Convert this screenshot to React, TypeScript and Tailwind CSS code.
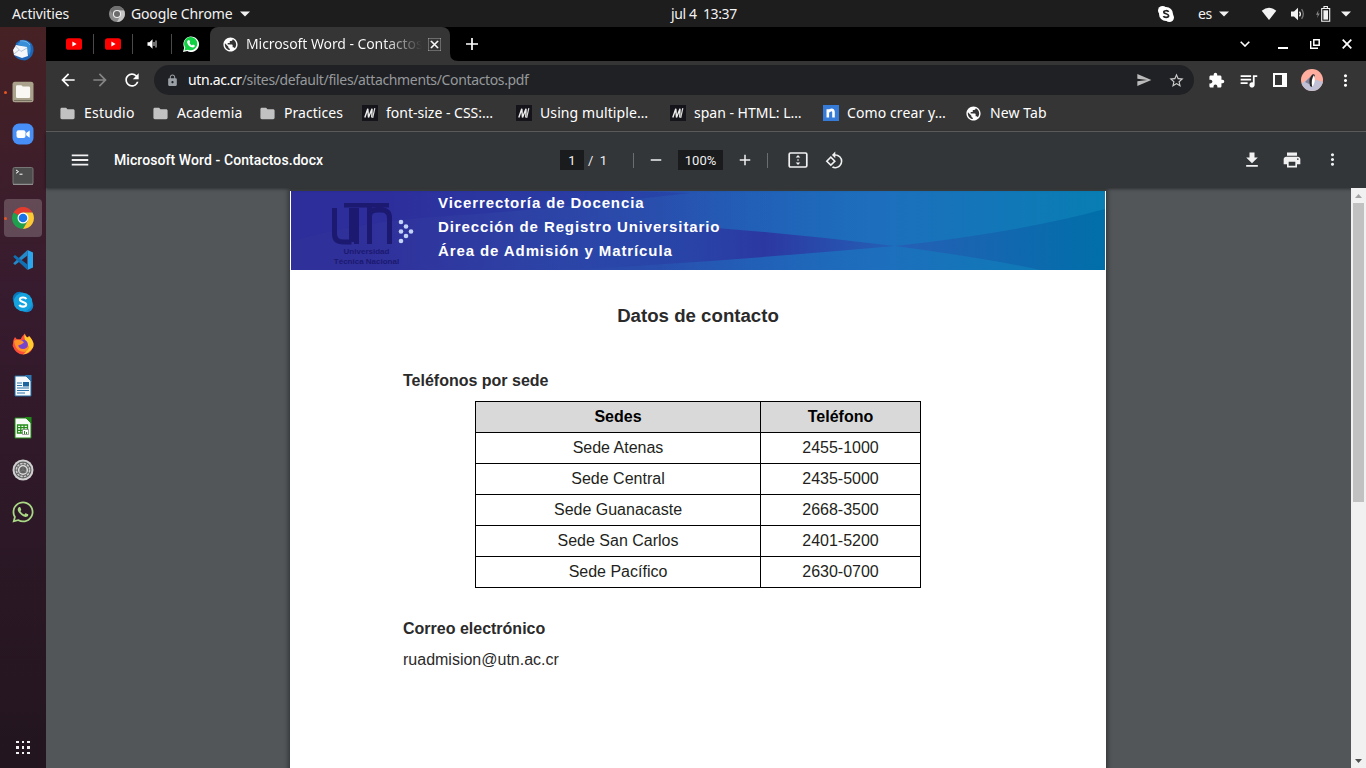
import React from "react";
import {
  MdArrowBack, MdArrowForward, MdRefresh, MdLock, MdSend, MdStarOutline, MdExtension, MdQueueMusic,
  MdMoreVert, MdPublic, MdMenu, MdRotate90DegreesCcw, MdFileDownload, MdPrint, MdFolder, MdClose, MdAdd, MdRemove,
} from "react-icons/md";
import { FaWhatsapp } from "react-icons/fa";

const ui = "font-['Noto_Sans',sans-serif] whitespace-pre leading-none";

function Cell({ w, children, className = "" }: { w: string; children?: React.ReactNode; className?: string }) {
  return <div className={`flex h-full shrink-0 items-center justify-center ${w} ${className}`}>{children}</div>;
}

function Caret() {
  return (
    <svg width="10" height="6" viewBox="0 0 10 6"><path d="M0 .5h10L5 5.5z" fill="#f2f2f2" /></svg>
  );
}

function TopBar() {
  return (
    <header className={`flex h-[27px] shrink-0 items-center bg-[#1d1d1d] text-[14px] text-[#f2f2f2] ${ui}`}>
      <div className="flex w-[671px] items-center pl-3">
        <span className="w-[97px] tracking-[-0.12px]">Activities</span>
        <svg width="16" height="16" viewBox="0 0 16 16" className="mr-[6px]">
          <circle cx="8" cy="8" r="8" fill="#8c8c8c" />
          <path d="M8 4.3h7A8 8 0 0 1 8 16l3.2-6.1z" fill="#c4c4c4" />
          <path d="M1.1 4A8 8 0 0 1 15 4.3H8L4.8 10z" fill="#707070" />
          <circle cx="8" cy="8" r="4.1" fill="#eee" /><circle cx="8" cy="8" r="3" fill="#6b6b6b" />
        </svg>
        <span className="w-[109px] tracking-[-0.15px]">Google Chrome</span>
        <Caret />
      </div>
      <span className="w-[70px] tracking-[-0.4px]">jul 4  13:37</span>
      <div className="flex flex-1 items-center justify-end">
        <Cell w="w-[20px]">
          <svg width="16" height="16" viewBox="0 0 16 16">
            <circle cx="8" cy="8" r="7" fill="#fff" /><circle cx="4.6" cy="4.6" r="4.6" fill="#fff" /><circle cx="11.4" cy="11.4" r="4.6" fill="#fff" />
            <path d="M10.6 5.8C10 4.4 5.8 4.2 5.8 6.2c0 2 4.8 1.2 4.8 3.6 0 2.1-4.5 2-5.2.3" fill="none" stroke="#222" strokeWidth="1.7" />
          </svg>
        </Cell>
        <span className="ml-[22px] w-[21px] tracking-[-0.4px]">es</span>
        <Caret />
        <Cell w="w-[20px]" className="ml-[30px]">
          <svg width="16" height="14" viewBox="0 0 16 14"><path d="M.7 3.8Q8-2.3 15.3 3.8L8 13z" fill="#f2f2f2" /></svg>
        </Cell>
        <Cell w="w-[20px]" className="ml-[9px]">
          <svg width="16" height="14" viewBox="0 0 16 14">
            <path d="M1 4.5h3L8 .8v12.4L4 9.5H1z" fill="#f2f2f2" />
            <path d="M9.5 4.6q1.8 2.4 0 4.8" fill="none" stroke="#f2f2f2" strokeWidth="1.3" />
            <path d="M11.6 2.2q3.4 4.8 0 9.6" fill="none" stroke="#777" strokeWidth="1.3" />
          </svg>
        </Cell>
        <Cell w="w-[18px]" className="ml-[6px]">
          <svg width="16" height="16" viewBox="0 0 16 16">
            <path d="M3.5 4L1 8.7h1.8L2 12l2.8-4.6H3z" fill="#888" />
            <path d="M6.7 2.5h8v12.8h-8zM9 .5h3.4v2H9z" fill="none" stroke="#f2f2f2" strokeWidth="1.1" />
            <path d="M8.4 4.3H13v9.3H8.4z" fill="#f2f2f2" />
          </svg>
        </Cell>
        <span className="mr-[15px] ml-[9px]"><Caret /></span>
      </div>
    </header>
  );
}

function Folder() {
  return <MdFolder size={17} color="#c2c2c2" className="-ml-[2px]" />;
}
function Mdn() {
  return (
    <svg width="16" height="16" viewBox="0 0 16 16">
      <path d="M0 0h16v16H0z" fill="#15141a" />
      <path d="M2.8 12.5L5.8 3.7 6.5 12.5 10 3.7 9.8 12.5" fill="none" stroke="#eee" strokeWidth="1.4" /><path d="M12.8 3.2L10.7 12.8" stroke="#ddd" strokeWidth="1.2" />
    </svg>
  );
}
function Youtube() {
  return (
    <svg width="16" height="12" viewBox="0 0 16 12"><rect width="16" height="11.6" y=".2" rx="2.6" fill="#f00" /><path d="M6.4 3.6v4.8L10.6 6z" fill="#fff" /></svg>
  );
}
function Chrome({ size }: { size: number }) {
  return (
    <svg width={size} height={size} viewBox="0 0 22 22">
      <path d="M11 11L1.5 5.5A11 11 0 0 1 20.5 5.5H11z" fill="#e33b2e" />
      <path d="M11 11L1.5 5.5A11 11 0 0 0 11 22l4.8-8.3z" fill="#1fa04d" />
      <path d="M11 5.5h9.5A11 11 0 0 1 11 22l4.8-8.3z" fill="#fcc934" />
      <circle cx="11" cy="11" r="5.5" fill="#fff" /><circle cx="11" cy="11" r="4.3" fill="#1a73e8" />
    </svg>
  );
}

function DockItem({ children, dot, active }: { children: React.ReactNode; dot?: boolean; active?: boolean }) {
  return (
    <div className="flex h-[42px] w-[46px] items-center">
      <i className={`ml-1 h-[38px] w-[38px] shrink-0 rounded-[4px] flex items-center ${active ? "bg-white/20" : ""}`}>
        <b className={`h-[3px] w-[3px] rounded-full ${dot ? "bg-[#e95420]" : ""}`} />
        <span className="ml-[5px] flex w-[22px] justify-center">{children}</span>
      </i>
    </div>
  );
}

function Dock() {
  return (
    <aside className="flex w-[46px] shrink-0 flex-col bg-linear-to-b from-[#462124] via-[#371b2e] via-35% to-[#22151f] pt-[2px]">
      <DockItem>
        <svg width="22" height="22" viewBox="0 0 22 22">
          <path d="M4 4Q9-1 15 1.5 22 4 21.5 12 20 20 13 21.5 5 21 2 16z" fill="#1f65b7" />
          <path d="M5 5q7-6 13 0 2 6-1 12-1-9-12-12z" fill="#398ed8" />
          <path d="M1 11l3-5 11 2 1 9-6 2-8-3z" fill="#f4f6fa" /><path d="M3.5 7l5.5 5.5L15 9M2 15l5-4" fill="none" stroke="#a6b7cf" strokeWidth=".8" />
          <path d="M8 2q7-1 10 4" stroke="#74bdf0" fill="none" />
        </svg>
      </DockItem>
      <DockItem dot>
        <svg width="22" height="22" viewBox="0 0 22 22">
          <rect x=".5" y=".7" width="21" height="20.6" rx="2.5" fill="#aaa28c" /><path d="M2 19.5h18" stroke="#777162" />
          <path d="M4 5.5q0-1.3 1.3-1.3h4l1.5 1.4h6q1.3 0 1.3 1.3v8.8q0 1.3-1.3 1.3H5.3Q4 17 4 15.700z" fill="#f8f7f4" />
        </svg>
      </DockItem>
      <DockItem>
        <svg width="22" height="22" viewBox="0 0 22 22">
          <rect x=".5" y=".5" width="21" height="21" rx="6.5" fill="#478ff7" />
          <rect x="4.5" y="7.2" width="9" height="7.8" rx="2" fill="#fff" /><path d="M14.2 10l3.5-2.600v7.300l-3.500-2.500z" fill="#fff" />
        </svg>
      </DockItem>
      <DockItem>
        <svg width="22" height="22" viewBox="0 0 22 22">
          <rect x="1" y="2.500" width="20" height="17" rx="1.500" fill="#4d4d4d" stroke="#767676" /><path d="M1 19.300h20" stroke="#999" />
          <path d="M4 5l2.500 1.600L4 8.300M7.500 9.200h3" fill="none" stroke="#fff" />
        </svg>
      </DockItem>
      <DockItem dot active><Chrome size={22} /></DockItem>
      <DockItem>
        <svg width="20" height="20" viewBox="0 0 20 20">
          <path d="M14.500 0L20 2.500v15L14.500 20z" fill="#2aa5ee" />
          <path d="M14.500 0v5.500L2 15 .2 13.300z" fill="#2489ca" /><path d="M14.500 20v-5.500L2 5 .2 6.700z" fill="#1070b3" />
        </svg>
      </DockItem>
      <DockItem>
        <svg width="22" height="22" viewBox="0 0 22 22">
          <circle cx="7.500" cy="7.500" r="6.800" fill="#0a76b8" /><circle cx="14.500" cy="14.500" r="6.800" fill="#1489d0" /><circle cx="11" cy="11" r="9.300" fill="#15a3df" />
          <path d="M14.300 8.100C13.400 5.900 7.900 6 7.900 8.600c0 2.900 6.300 1.700 6.300 4.900 0 2.900-6 2.700-6.700.3" fill="none" stroke="#fff" strokeWidth="2.100" />
        </svg>
      </DockItem>
      <DockItem>
        <svg width="22" height="22" viewBox="0 0 22 22">
          <path d="M3 4l2 2.500L9 6q0-2 4-5.500 0 3 3 4l1-1.500q6 6 4 11.500Q18 21.500 11 21.500T.700 13Q.500 7 3 4z" fill="#ff4f3a" />
          <path d="M13 .500q0 3 3 4l1-1.500q6 6 4 11.500-4 6-10 7 7-5 4-12-4-4-2-9z" fill="#ffcb2e" />
          <circle cx="11" cy="11.500" r="4.800" fill="#7544cf" /><path d="M2 8l3-1.500 5 1 2 2-3 2-3 1q1 3.500 5 3.500t6-4q1 5-4 7-8 0-10-7z" fill="#ff9529" />
        </svg>
      </DockItem>
      <DockItem>
        <svg width="18" height="22" viewBox="0 0 18 22">
          <path d="M1 1h11l5 5v15H1z" fill="#f6fafd" stroke="#21689f" /><path d="M11 0h6.500v7z" fill="#2d79b3" />
          <path d="M3 8h5M3 10.500h5M3 13h12M3 15.500h12M3 18h8" stroke="#2d75aa" strokeWidth="1.200" /><path d="M9 7h6v4.500H9z" fill="#1d659f" />
        </svg>
      </DockItem>
      <DockItem>
        <svg width="18" height="22" viewBox="0 0 18 22">
          <path d="M1 1h11l5 5v15H1z" fill="#f8fcf6" stroke="#218415" /><path d="M11 0h6.500v7z" fill="#208b18" />
          <path d="M3.500 8h10v8h-10zM3.500 10.600h10M3.500 13.300h10M6.800 8v8M10 8v8" fill="none" stroke="#248c19" strokeWidth="1.300" /><path d="M8.500 12.500h6v5h-6z" fill="#fff" stroke="#777" strokeWidth=".7" /><path d="M10.500 17v-3M12.500 17v-2" stroke="#248c19" />
        </svg>
      </DockItem>
      <DockItem>
        <svg width="22" height="22" viewBox="0 0 22 22">
          <circle cx="11" cy="11" r="10.500" fill="#d0d0d0" /><circle cx="11" cy="11" r="8.500" fill="#616161" />
          <circle cx="11" cy="11" r="6.600" fill="none" stroke="#ccc" strokeWidth="1.500" strokeDasharray="2.500 1" />
          <circle cx="11" cy="11" r="4.300" fill="none" stroke="#ddd" strokeWidth="1.500" /><path d="M11 11V7M11 11l-3.500 2M11 11l3.500 2" stroke="#777" />
        </svg>
      </DockItem>
      <DockItem><FaWhatsapp size={24} color="#a9d985" className="-mx-px" /></DockItem>
      <div className="mt-auto mb-[14px] grid grid-cols-3 gap-[3px] self-center">
        {Array.from({ length: 9 }, (_, i) => <i key={i} className="h-[2.500px] w-[2.500px] bg-[#f2f2f2]" />)}
      </div>
    </aside>
  );
}

function Tabs() {
  return (
    <div className="flex h-[34px] shrink-0 items-center bg-black text-white">
      <Cell w="w-[47px]" className="pl-[9px]"><Youtube /></Cell>
      <i className="h-5 w-px bg-[#4a4a4a]" />
      <Cell w="w-[38px]"><Youtube /></Cell>
      <i className="h-5 w-px bg-[#4a4a4a]" />
      <Cell w="w-[38px]">
        <svg width="10" height="10" viewBox="0 0 10 10"><path d="M.500 3.300h2L5.500.300v9.400l-3-3h-2z" fill="#fff" /><path d="M7 3v4M9 1.500v7" stroke="#ddd" /></svg>
      </Cell>
      <i className="h-5 w-px bg-[#4a4a4a]" />
      <Cell w="w-[38px]">
        <svg width="16" height="16" viewBox="0 0 16 16">
          <path d="M0 16l1.200-4.300A7.800 7.800 0 1 1 4.300 15z" fill="#fff" /><path d="M1.500 14.500l.8-3A6.600 6.600 0 1 1 5 13.700z" fill="#10d044" />
          <path d="M5.200 4.200l1-.2 1 2-.8 1.100q.9 1.500 2.500 2.300l1.100-1 1.900 1q0 1.900-2 2.100-4.700-.5-5.900-5.300 0-1.300 1.200-2z" fill="#fff" />
        </svg>
      </Cell>
      <div className="flex h-full w-[240px] items-center rounded-t-[8px] bg-[#353535]">
        <Cell w="w-[36px]" className="pl-[4px]"><MdPublic size={17} /></Cell>
        <span className={`w-[176px] overflow-hidden bg-linear-to-r from-white from-78% to-transparent bg-clip-text py-1 text-[14px] tracking-[-0.08px] text-transparent ${ui}`}>Microsoft Word - Contactos.docx</span>
        <Cell w="w-[24px]"><MdClose size={13} strokeWidth="1" /></Cell>
      </div>
      <svg width="8" height="8" viewBox="0 0 8 8" className="self-end"><path d="M0 0v8h8Q0 8 0 0" fill="#353535" /></svg>
      <Cell w="w-[28px]"><svg width="12" height="12" viewBox="0 0 12 12"><path d="M6 0v12M0 6h12" stroke="#fff" strokeWidth="1.700" /></svg></Cell>
      <div className="flex h-full flex-1 items-center justify-end">
        <Cell w="w-[38px]"><svg width="10" height="6" viewBox="0 0 10 6"><path d="M.700.700L5 5 9.300.700" fill="none" stroke="#fff" strokeWidth="1.600" /></svg></Cell>
        <Cell w="w-[38px]" className="pt-[8px]"><i className="h-[2px] w-[10px] bg-white" /></Cell>
        <Cell w="w-[26px]"><svg width="10" height="10" viewBox="0 0 10 10"><path d="M3.800.800h5.400v5.400H3.800z" fill="none" stroke="#fff" strokeWidth="1.500" /><path d="M.700 2v7.300H8" fill="none" stroke="#fff" strokeWidth="1.400" /></svg></Cell>
        <Cell w="w-[38px]"><svg width="10" height="10" viewBox="0 0 10 10"><path d="M.700.700l8.600 8.600M9.300.700L.700 9.300" stroke="#fff" strokeWidth="1.700" /></svg></Cell>
      </div>
    </div>
  );
}

function Toolbar() {
  return (
    <div className="flex h-[38px] shrink-0 items-center bg-[#353535] pl-[6px] text-white">
      <Cell w="w-[32px]"><MdArrowBack size={20} /></Cell>
      <Cell w="w-[32px]"><MdArrowForward size={20} color="#858585" /></Cell>
      <Cell w="w-[32px]"><MdRefresh size={20} /></Cell>
      <div className="ml-[6px] flex h-[30px] w-[1040px] items-center rounded-full bg-[#202124]">
        <Cell w="w-[34px]" className="pl-[2px]"><MdLock size={13} color="#9aa0a6" /></Cell>
        <span className={`text-[14px] tracking-[-0.36px] text-[#96999c] ${ui}`}><span className="text-white">utn.ac.cr</span>/sites/default/files/attachments/Contactos.pdf</span>
        <div className="ml-auto flex pr-[2px]">
          <Cell w="w-[32px]"><MdSend size={16} color="#bbb" /></Cell>
          <Cell w="w-[32px]"><MdStarOutline size={17} color="#ccc" /></Cell>
        </div>
      </div>
      <Cell w="w-[32px]" className="ml-[6px]"><MdExtension size={17} /></Cell>
      <Cell w="w-[32px]"><MdQueueMusic size={21} /></Cell>
      <Cell w="w-[32px]"><svg width="14" height="14" viewBox="0 0 14 14"><path d="M1 1h12v12H1z" fill="none" stroke="#fff" strokeWidth="2" /><path d="M9 0h5v14H9z" fill="#fff" /></svg></Cell>
      <Cell w="w-[32px]">
        <svg width="22" height="22" viewBox="0 0 22 22" className="rounded-full">
          <path d="M0 0h22v22H0z" fill="#ffad9e" /><path d="M0 15l8-6 4 3 4-1 6 2v9H0z" fill="#bfc0d5" /><path d="M4 13l5-5 1 8z" fill="#808098" />
          <path d="M9 17q-2-9 3-12l2 1q-3 9-3 12z" fill="#282629" /><path d="M11 17q-1-7 2-11 2 6-1 11z" fill="#fff" />
        </svg>
      </Cell>
      <Cell w="w-[34px]"><MdMoreVert size={19} /></Cell>
    </div>
  );
}

const bookmarks: { label: string; icon: React.ReactNode; box: string; gap: string; track: string }[] = [
  { label: "Estudio", icon: <Folder />, box: "w-[93px]", gap: "w-[23px]", track: "tracking-[0.25px]" },
  { label: "Academia", icon: <Folder />, box: "w-[107px]", gap: "w-[23px]", track: "tracking-[0.1px]" },
  { label: "Practices", icon: <Folder />, box: "w-[101px]", gap: "w-[23px]", track: "tracking-[0.05px]" },
  { label: "font-size - CSS:…", icon: <Mdn />, box: "w-[154px]", gap: "w-[24px]", track: "tracking-[0px]" },
  { label: "Using multiple…", icon: <Mdn />, box: "w-[154px]", gap: "w-[24px]", track: "tracking-[0.1px]" },
  { label: "span - HTML: L…", icon: <Mdn />, box: "w-[153px]", gap: "w-[24px]", track: "tracking-[0px]" },
  {
    label: "Como crear y…",
    icon: <svg width="16" height="16" viewBox="0 0 16 16"><path d="M0 0h16v16H0z" fill="#367bd8" /><path d="M4.800 12.500V4.300M4.800 7q5-4.300 5.700 0v5.500" fill="none" stroke="#fff" strokeWidth="2.600" /></svg>,
    box: "w-[143px]", gap: "w-[24px]", track: "tracking-[0.1px]",
  },
  { label: "New Tab", icon: <MdPublic size={17} className="-ml-[1px]" />, box: "w-[90px]", gap: "w-[24px]", track: "tracking-[0.1px]" },
];

function Bookmarks() {
  return (
    <nav className="flex h-[33px] shrink-0 border-b border-[#626262] bg-[#353535] pb-1 pl-[15px] text-white">
      {bookmarks.map((b) => (
        <div key={b.label} className={`flex shrink-0 items-center ${b.box}`}>
          <span className={`shrink-0 ${b.gap}`}>{b.icon}</span>
          <span className={`text-[14px] ${b.track} ${ui}`}>{b.label}</span>
        </div>
      ))}
    </nav>
  );
}

function PdfBar() {
  return (
    <div className="z-10 flex h-[56px] shrink-0 items-center bg-[#323639] font-[Roboto,sans-serif] text-[13px] leading-none text-[#f1f1f1] shadow-[0_1px_3px_rgba(0,0,0,0.45)]">
      <Cell w="w-[68px]"><MdMenu size={22} /></Cell>
      <span className="w-[446px] text-[14px] font-medium tracking-[0.08px] text-white">Microsoft Word - Contactos.docx</span>
      <span className="flex h-5 w-6 items-center justify-center bg-[#191b1c]">1</span>
      <span className="ml-[4px] w-[45px] whitespace-pre">/  1</span>
      <i className="h-[15px] w-px bg-[#6b6e70]" />
      <Cell w="w-[44px]"><MdRemove size={18} /></Cell>
      <span className="flex h-5 w-[45px] items-center justify-center bg-[#191b1c]">100%</span>
      <Cell w="w-[44px]"><MdAdd size={18} /></Cell>
      <i className="h-[15px] w-px bg-[#6b6e70]" />
      <Cell w="w-[36px]" className="ml-[12px]">
        <svg width="20" height="16" viewBox="0 0 20 16"><rect x="1.200" y="1" width="17.600" height="14" rx="1.300" fill="none" stroke="#f1f1f1" strokeWidth="1.700" /><path d="M7.700 5.500L10 3l2.300 2.500zM7.700 10.500L10 13l2.300-2.500zM9.400 7.300h1.200v1.400H9.400z" fill="#f1f1f1" /></svg>
      </Cell>
      <Cell w="w-[36px]"><MdRotate90DegreesCcw size={19} /></Cell>
      <div className="ml-auto flex pr-[14px]">
        <Cell w="w-[40px]"><MdFileDownload size={20} /></Cell>
        <Cell w="w-[40px]"><MdPrint size={20} /></Cell>
        <Cell w="w-[40px]"><MdMoreVert size={19} /></Cell>
      </div>
    </div>
  );
}

const rows = [
  ["Sede Atenas", "2455-1000"], ["Sede Central", "2435-5000"], ["Sede Guanacaste", "2668-3500"],
  ["Sede San Carlos", "2401-5200"], ["Sede Pacífico", "2630-0700"],
];

function Banner() {
  return (
    <div className="relative mx-px h-[79px] overflow-hidden bg-linear-to-r from-[#30309b] from-10% via-[#235bb5] via-60% to-[#087eb5]">
      <svg width="814" height="79" viewBox="0 0 814 79" className="absolute inset-0">
        <defs>
          <linearGradient id="l"><stop offset="0" stopColor="#2543a5" stopOpacity="0" /><stop offset=".65" stopColor="#2c38a2" /><stop offset="1" stopColor="#2461b6" /></linearGradient>
          <linearGradient id="r"><stop offset="0" stopColor="#265fb6" /><stop offset="1" stopColor="#006fa9" /></linearGradient>
          <linearGradient id="m"><stop offset="0" stopColor="#1f65b9" stopOpacity="0" /><stop offset=".5" stopColor="#1d6fbd" /><stop offset="1" stopColor="#087eb3" /></linearGradient>
        </defs>
        <path d="M370 0h444v79H370z" fill="url(#m)" />
        <path d="M230 27q180 4 374 28Q400 73 270 79H230z" fill="url(#l)" />
        <path d="M604 55Q730 41 814 18v61h-65Q700 68 604 55z" fill="url(#r)" />
        <path d="M0 50Q70 30 155 25T400 2L330 0H0z" fill="#25259a" opacity=".25" />
      </svg>
      <div className="relative flex">
        <div className="flex w-[147px] flex-col items-center pt-[12px] pl-[16px] text-[#1b1970]">
          <svg width="82" height="42" viewBox="0 0 82 42">
            <path d="M2.500 5v26q0 8 9 8h8M19.500 5v34M24.500 5v36M12 2h45M37.500 3v38M37.500 13q0-6 8-6h4q8 0 8 8v26" fill="none" stroke="#1b1970" strokeWidth="5" />
            <g fill="#c3d3f5"><circle cx="69" cy="19" r="2.300" /><circle cx="74" cy="23.500" r="2.300" /><circle cx="69" cy="28.500" r="2.300" /><circle cx="79" cy="28.500" r="2.300" /><circle cx="74" cy="33" r="2.300" /><circle cx="69" cy="38" r="2.300" /></g>
          </svg>
          <div className="w-[82px] pt-[2px] text-center font-['Liberation_Sans',sans-serif] text-[8px] leading-[10px] font-bold"><p className="pr-3">Universidad</p><p className="pr-3 whitespace-nowrap">Técnica Nacional</p></div>
        </div>
        <div className="font-['Liberation_Sans',sans-serif] text-[15px] leading-[24px] font-bold tracking-[0.9px] text-white">
          <p>Vicerrectoría de Docencia</p><p>Dirección de Registro Universitario</p><p>Área de Admisión y Matrícula</p>
        </div>
      </div>
    </div>
  );
}

export default function App() {
  return (
    <div className="flex h-[768px] w-[1366px] flex-col overflow-hidden">
      <TopBar />
      <div className="flex min-h-0 flex-1">
        <Dock />
        <main className="flex min-w-0 flex-1 flex-col">
          <Tabs />
          <Toolbar />
          <Bookmarks />
          <PdfBar />
          <div className="flex min-h-0 flex-1 bg-[#525659]">
            <div className="flex flex-1 justify-center overflow-hidden pt-[3px] pr-px">
              <article className="h-[700px] w-[816px] bg-white font-['Liberation_Sans',sans-serif] text-[16px] text-[#231f20] shadow-[0_0_4px_2px_rgba(0,0,0,0.35)]">
                <Banner />
                <h1 className="pt-[34px] text-center text-[18.667px] leading-[24px] font-bold text-[#2b2a2a]">Datos de contacto</h1>
                <div className="pl-[113px] leading-[24px]">
                  <h2 className="pt-[41px] font-bold text-[#2b2a2a]">Teléfonos por sede</h2>
                  <table className="mt-[8px] ml-[72px] w-[446px] table-fixed border-collapse text-center">
                    <colgroup><col className="w-[285px]" /><col className="w-[160px]" /></colgroup>
                    <thead>
                      <tr className="h-[31px] bg-[#d9d9d9] text-black"><th className="border border-black p-0">Sedes</th><th className="border border-black p-0">Teléfono</th></tr>
                    </thead>
                    <tbody>
                      {rows.map((r) => (
                        <tr key={r[0]} className="h-[31px]"><td className="border border-black p-0">{r[0]}</td><td className="border border-black p-0">{r[1]}</td></tr>
                      ))}
                    </tbody>
                  </table>
                  <h2 className="pt-[29px] font-bold text-[#2b2a2a]">Correo electrónico</h2>
                  <p className="pt-[7px] text-[#2b2a2a]">ruadmision@utn.ac.cr</p>
                </div>
              </article>
            </div>
            <div className="z-20 flex w-[15px] flex-col items-center bg-[#f1f1f1]">
              <svg width="15" height="15" viewBox="0 0 15 15"><path d="M4 10h7L7.500 6z" fill="#a3a3a3" /></svg>
              <i className="h-[299px] w-[11px] bg-[#c1c1c1]" />
              <svg width="15" height="15" viewBox="0 0 15 15" className="mt-auto"><path d="M4 6h7l-3.500 4z" fill="#505050" /></svg>
            </div>
          </div>
        </main>
      </div>
    </div>
  );
}
